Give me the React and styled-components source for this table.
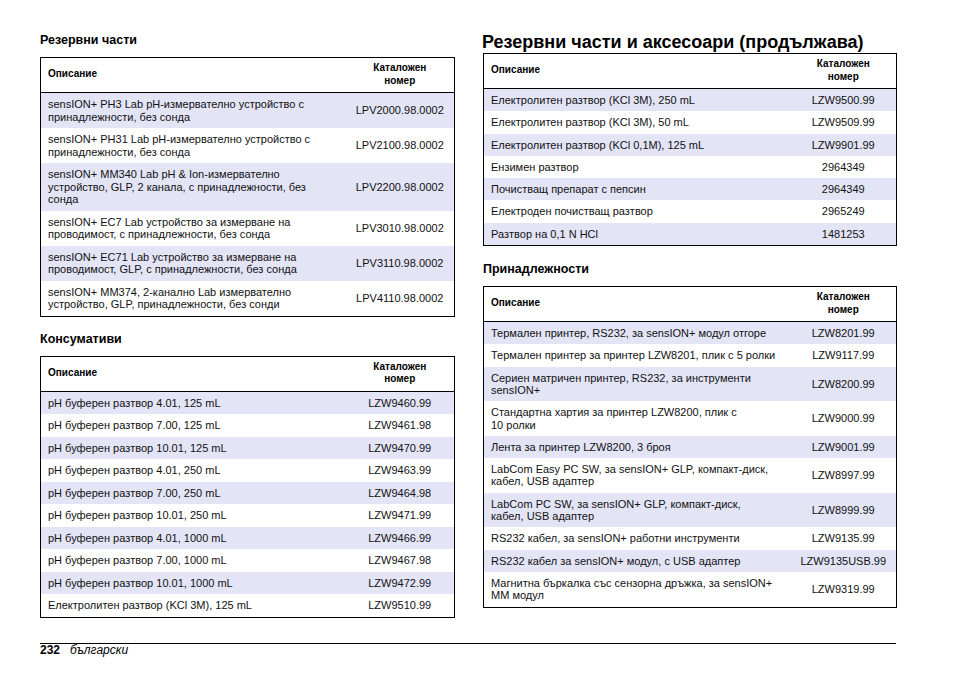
import styled, { createGlobalStyle } from "styled-components";

const GlobalStyle = createGlobalStyle`
  html, body {
    margin: 0;
    padding: 0;
    background: #ffffff;
  }
  body {
    font-family: "Liberation Sans", Arial, "Noto Sans", sans-serif;
    color: #000000;
  }
`;

const spareParts = [
  ["sensION+ PH3 Lab pH-измервателно устройство с принадлежности, без сонда", "LPV2000.98.0002"],
  ["sensION+ PH31 Lab pH-измервателно устройство с принадлежности, без сонда", "LPV2100.98.0002"],
  ["sensION+ MM340 Lab pH & Ion-измервателно устройство, GLP, 2 канала, с принадлежности, без сонда", "LPV2200.98.0002"],
  ["sensION+ EC7 Lab устройство за измерване на проводимост, с принадлежности, без сонда", "LPV3010.98.0002"],
  ["sensION+ EC71 Lab устройство за измерване на проводимост, GLP, с принадлежности, без сонда", "LPV3110.98.0002"],
  ["sensION+ MM374, 2-канално Lab измервателно устройство, GLP, принадлежности, без сонди", "LPV4110.98.0002"],
];

const consumables = [
  ["pH буферен разтвор 4.01, 125 mL", "LZW9460.99"],
  ["pH буферен разтвор 7.00, 125 mL", "LZW9461.98"],
  ["pH буферен разтвор 10.01, 125 mL", "LZW9470.99"],
  ["pH буферен разтвор 4.01, 250 mL", "LZW9463.99"],
  ["pH буферен разтвор 7.00, 250 mL", "LZW9464.98"],
  ["pH буферен разтвор 10.01, 250 mL", "LZW9471.99"],
  ["pH буферен разтвор 4.01, 1000 mL", "LZW9466.99"],
  ["pH буферен разтвор 7.00, 1000 mL", "LZW9467.98"],
  ["pH буферен разтвор 10.01, 1000 mL", "LZW9472.99"],
  ["Електролитен разтвор (KCl 3M), 125 mL", "LZW9510.99"],
];

const consumablesCont = [
  ["Електролитен разтвор (KCl 3M), 250 mL", "LZW9500.99"],
  ["Електролитен разтвор (KCl 3M), 50 mL", "LZW9509.99"],
  ["Електролитен разтвор (KCl 0,1M), 125 mL", "LZW9901.99"],
  ["Ензимен разтвор", "2964349"],
  ["Почистващ препарат с пепсин", "2964349"],
  ["Електроден почистващ разтвор", "2965249"],
  ["Разтвор на 0,1 N HCl", "1481253"],
];

// non-breaking spaces keep the wraps of the printed page
const accessories = [
  ["Термален принтер, RS232, за sensION+ модул отгоре", "LZW8201.99"],
  ["Термален принтер за принтер LZW8201, плик с 5 ролки", "LZW9117.99"],
  ["Сериен матричен принтер, RS232, за инструменти sensION+", "LZW8200.99"],
  ["Стандартна хартия за принтер LZW8200, плик с 10\u00a0ролки", "LZW9000.99"],
  ["Лента за принтер LZW8200, 3 броя", "LZW9001.99"],
  ["LabCom Easy PC SW, за sensION+ GLP, компакт-диск, кабел, USB адаптер", "LZW8997.99"],
  ["LabCom PC SW, за sensION+ GLP, компакт-диск, кабел,\u00a0USB адаптер", "LZW8999.99"],
  ["RS232 кабел, за sensION+ работни инструменти", "LZW9135.99"],
  ["RS232 кабел за sensION+ модул, с USB адаптер", "LZW9135USB.99"],
  ["Магнитна бъркалка със сензорна дръжка, за sensION+ MM модул", "LZW9319.99"],
];

const PartsTable = ({ rows, descWidth, tight }) => (
  <Table tight={tight}>
    <colgroup>
      <col style={{ width: descWidth }} />
      <col />
    </colgroup>
    <thead>
      <tr>
        <HeadCell>Описание</HeadCell>
        <HeadCell center>
          Каталожен
          <br />
          номер
        </HeadCell>
      </tr>
    </thead>
    <tbody>
      {rows.map(([desc, code]) => (
        <Row key={desc + code}>
          <Cell>{desc}</Cell>
          <Cell center>{code}</Cell>
        </Row>
      ))}
    </tbody>
  </Table>
);

const App = () => {
  return (
    <>
      <GlobalStyle />
      <Page>
        <Columns>
          <Column>
            <SubTitle>Резервни части</SubTitle>
            <PartsTable rows={spareParts} descWidth="305px" />
            <SubTitle spaced>Консумативи</SubTitle>
            <PartsTable rows={consumables} descWidth="305px" />
          </Column>
          <Column>
            <MainTitle>Резервни части и аксесоари (продължава)</MainTitle>
            <PartsTable rows={consumablesCont} descWidth="307px" tight />
            <SubTitle spaced wide>
              Принадлежности
            </SubTitle>
            <PartsTable rows={accessories} descWidth="307px" tight />
          </Column>
        </Columns>
        <Footer>
          <PageNumber>232</PageNumber>
          <Language>български</Language>
        </Footer>
      </Page>
    </>
  );
};

export default App;

const Page = styled.div`
  width: 954px;
  height: 673px;
  box-sizing: border-box;
  padding: 31px 57px 0 40px;
  display: flex;
  flex-direction: column;
`;

const Columns = styled.div`
  display: grid;
  grid-template-columns: 415px 414px;
  column-gap: 28px;
  align-items: start;
`;

const Column = styled.div`
  display: flex;
  flex-direction: column;
`;

const SubTitle = styled.div`
  font-size: 12.5px;
  font-weight: bold;
  line-height: 17px;
  margin-top: ${({ spaced, wide }) => (wide ? "15px" : spaced ? "14px" : "1px")};
  margin-bottom: 8px;
`;

const MainTitle = styled.h1`
  margin: 0;
  font-size: 18px;
  font-weight: bold;
  line-height: 22px;
  margin-left: -1px;
`;

const Table = styled.table`
  width: 100%;
  border-collapse: collapse;
  border: 1px solid #000000;
  table-layout: fixed;
  font-size: 11px;
  line-height: ${({ tight }) => (tight ? "12.3px" : "12.5px")};
`;

const HeadCell = styled.th`
  font-size: 10px;
  font-weight: bold;
  line-height: 12.5px;
  text-align: ${({ center }) => (center ? "center" : "left")};
  vertical-align: middle;
  padding: 4px 7px 5px;
  height: 24px;
  border-bottom: 1px solid #000000;
`;

const Row = styled.tr`
  &:nth-child(odd) {
    background: #e4e4f7;
  }
`;

const Cell = styled.td`
  text-align: ${({ center }) => (center ? "center" : "left")};
  vertical-align: middle;
  padding: 5px 7px;
  color: #111111;
`;

const Footer = styled.div`
  margin-top: auto;
  margin-bottom: 17px;
  width: 856px;
  border-top: 1px solid #000000;
  display: flex;
  align-items: baseline;
  gap: 10px;
  font-size: 12px;
  line-height: 12px;
`;

const PageNumber = styled.span`
  font-weight: bold;
`;

const Language = styled.span`
  font-style: italic;
`;
